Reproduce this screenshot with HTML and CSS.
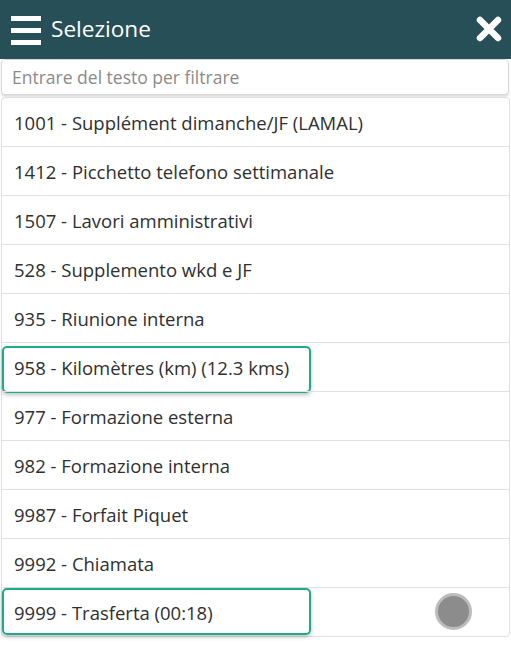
FILE: index.html
```html
<!DOCTYPE html>
<html lang="it">
<head>
<meta charset="utf-8">
<title>Selezione</title>
<link rel="stylesheet" href="styles.css">
</head>
<body>
<header class="bar">
  <div class="burger"><span></span><span></span><span></span></div>
  <h1 class="title">Selezione</h1>
  <svg class="close" width="26" height="26" viewBox="0 0 26 26"><path d="M4 4 L22 22 M22 4 L4 22" stroke="#fff" stroke-width="6.5" stroke-linecap="round"/></svg>
</header>
<div class="filter"><input type="text" placeholder="Entrare del testo per filtrare"></div>
<ul class="list">
  <li class="row">1001 - Supplément dimanche/JF (LAMAL)</li>
  <li class="row">1412 - Picchetto telefono settimanale</li>
  <li class="row">1507 - Lavori amministrativi</li>
  <li class="row">528 - Supplemento wkd e JF</li>
  <li class="row">935 - Riunione interna</li>
  <li class="row">958 - Kilomètres (km) (12.3 kms)<span class="mark mark-a"></span></li>
  <li class="row">977 - Formazione esterna</li>
  <li class="row">982 - Formazione interna</li>
  <li class="row">9987 - Forfait Piquet</li>
  <li class="row">9992 - Chiamata</li>
  <li class="row">9999 - Trasferta (00:18)<span class="mark mark-b"></span><span class="dot"></span></li>
</ul>
</body>
</html>
```

FILE: styles.css
```css
* { box-sizing: border-box; }
html, body { margin: 0; padding: 0; background: #fff; }
body { font-family: "Open Sans", "Noto Sans", sans-serif; color: #333; width: 511px; height: 656px; overflow: hidden; }

.bar {
  height: 59px;
  background: #274f57;
  display: flex;
  align-items: center;
  padding: 0 9px 0 11px;
}
.burger { display: flex; flex-direction: column; gap: 7px; width: 30px; margin-top: 1px; }
.burger span { display: block; height: 5px; background: #fff; }
.title { margin: 0 0 0 10px; font-weight: 400; font-size: 22.6px; color: #fff; flex: 1; line-height: 1; }
.close { display: block; margin-top: -1px; }

.filter { padding: 0 2px 0 1px; }
.filter input {
  display: block;
  width: 100%;
  height: 36px;
  border: 1px solid #d8d8d8;
  border-radius: 4px;
  padding: 0 10px;
  font-family: "Open Sans", sans-serif;
  font-size: 17.5px;
  color: #333;
  box-shadow: 0 2px 2px rgba(0,0,0,0.12);
  outline: none;
}
.filter input::placeholder { color: #8a8a8a; }

.list {
  list-style: none;
  margin: 2px 1px 0 1px;
  padding: 0;
  border: 1px solid #e0e0e0;
  border-radius: 4px;
}
.row {
  position: relative;
  height: 49px;
  display: flex;
  align-items: center;
  padding-left: 12px;
  font-size: 18.5px;
  color: #2f2f2f;
  border-top: 1px solid #e2e2e2;
}
.row:first-child { border-top: none; height: 48px; }

.mark {
  position: absolute;
  left: 0;
  width: 309px;
  height: 47px;
  border: 2px solid #1fa98b;
  border-radius: 5px;
  box-shadow: 0 2px 4px rgba(0,0,0,0.25);
}
.mark-a { top: 3px; }
.mark-b { top: 0; }

.dot {
  position: absolute;
  right: 37px;
  top: 5px;
  width: 37px;
  height: 37px;
  border-radius: 50%;
  background: #8c8c8c;
  border: 3px solid #bcbcbc;
}
```
